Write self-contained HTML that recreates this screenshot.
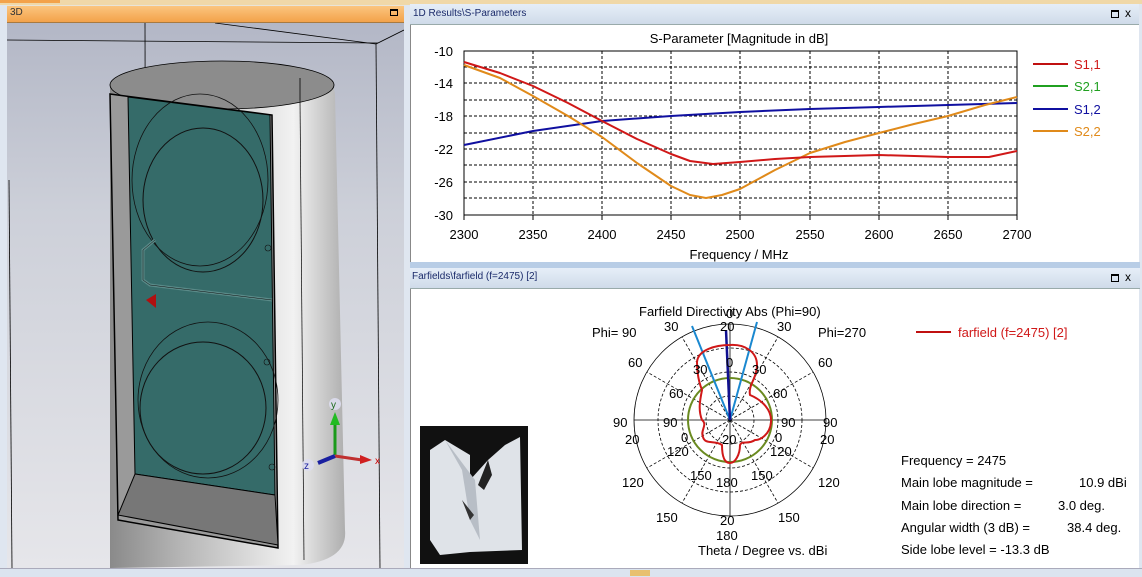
<!DOCTYPE html>
<html><head><meta charset="utf-8"><style>
html,body{margin:0;padding:0;}
body{width:1142px;height:576px;position:relative;overflow:hidden;background:#e8e4d8;font-family:"Liberation Sans",sans-serif;}
.abs{position:absolute;}
.t{position:absolute;font-size:12px;color:#000;white-space:nowrap;}
</style></head><body>
<div class="abs" style="left:0;top:0;width:1142px;height:5px;background:#f0d8a8"></div>
<div class="abs" style="left:0;top:0;width:60px;height:3px;background:#f3a24a"></div>
<!-- 3D panel -->
<div class="abs" style="left:0;top:5px;width:7px;height:565px;background:#dfe6f0"></div>
<div class="abs" style="left:7px;top:6px;width:397px;height:16px;background:linear-gradient(#fbc57f,#f3a24a);border-bottom:1px solid #a87a40"></div>
<div class="t" style="left:10px;top:7px;font-size:10px;color:#333">3D</div>
<div class="abs" style="left:390px;top:9px;width:8px;height:7px;border:1px solid #000;border-top-width:2px;box-sizing:border-box"></div>
<svg class="abs" style="left:7px;top:23px" width="397" height="545" viewBox="7 23 397 545">
<defs>
<linearGradient id="bg" x1="0" y1="0" x2="0" y2="1"><stop offset="0" stop-color="#b3b7c6"/><stop offset="0.35" stop-color="#cdd0d9"/><stop offset="1" stop-color="#e6e6ea"/></linearGradient>
<linearGradient id="cyl" x1="0" y1="0" x2="1" y2="0"><stop offset="0" stop-color="#8a8a8a"/><stop offset="0.3" stop-color="#b5b5b5"/><stop offset="0.78" stop-color="#f2f2f2"/><stop offset="1" stop-color="#aeaeae"/></linearGradient>
</defs>
<rect x="7" y="23" width="397" height="545" fill="url(#bg)"/>
<line x1="7" y1="40" x2="378" y2="43" stroke="#000" stroke-width="0.8"/>
<line x1="145" y1="23" x2="146" y2="540" stroke="#000" stroke-width="0.8"/>
<line x1="215" y1="23" x2="376" y2="44" stroke="#000" stroke-width="0.8"/>
<line x1="376" y1="44" x2="404" y2="30" stroke="#000" stroke-width="0.8"/>
<line x1="376" y1="44" x2="380" y2="568" stroke="#000" stroke-width="0.8"/>
<line x1="9" y1="180" x2="12" y2="568" stroke="#000" stroke-width="0.8"/>
<path d="M110 90 Q110 62 220 62 Q335 65 335 95 L345 530 Q348 560 300 565 L110 568 Z" fill="url(#cyl)"/>
<ellipse cx="222" cy="85" rx="112" ry="24" fill="#8c8c8c" stroke="#000" stroke-width="0.8"/>
<path d="M300 78 L300 100" stroke="#000" stroke-width="0.8"/>
<path d="M300 100 L304 560" stroke="#000" stroke-width="0.7"/>
<path d="M110 94 L272 115 L278 548 L118 520 Z" fill="#9a9a9a" stroke="#000" stroke-width="1.5"/>
<path d="M128 97 L270 115 L275 495 L135 474 Z" fill="#356b69" stroke="#000" stroke-width="1"/>
<path d="M118 515 L135 474 L275 495 L278 545 Z" fill="#777" stroke="#000" stroke-width="1"/>
<ellipse cx="200" cy="180" rx="68" ry="86" fill="none" stroke="#111" stroke-width="0.8"/>
<ellipse cx="203" cy="200" rx="60" ry="72" fill="none" stroke="#111" stroke-width="1"/>
<ellipse cx="208" cy="400" rx="70" ry="78" fill="none" stroke="#111" stroke-width="0.8"/>
<ellipse cx="203" cy="408" rx="63" ry="66" fill="none" stroke="#111" stroke-width="1"/>
<path d="M155 240 L143 250 L143 280 L150 285 L272 300" stroke="#5a8a88" stroke-width="3" fill="none"/>
<path d="M155 240 L143 250 L143 280 L150 285 L272 300" stroke="#111" stroke-width="0.5" fill="none"/>
<path d="M146 300 L156 294 L156 308 Z" fill="#b01010"/>
<circle cx="268" cy="248" r="3" fill="none" stroke="#111" stroke-width="0.6"/>
<circle cx="267" cy="362" r="3" fill="none" stroke="#111" stroke-width="0.6"/>
<circle cx="272" cy="467" r="3" fill="none" stroke="#111" stroke-width="0.6"/>
<line x1="335" y1="455" x2="335" y2="418" stroke="#1a9a1a" stroke-width="3"/>
<path d="M330 425 L335 412 L340 425 Z" fill="#22bb22"/>
<circle cx="335" cy="404" r="6" fill="#dde" opacity="0.9"/><text x="331" y="408" font-size="10" fill="#1a6a1a" font-family="Liberation Sans">y</text>
<line x1="335" y1="456" x2="362" y2="460" stroke="#c03030" stroke-width="3"/>
<path d="M360 455 L372 460 L360 464 Z" fill="#d02020"/>
<text x="375" y="464" font-size="10" fill="#c00" font-family="Liberation Sans">x</text>
<line x1="335" y1="456" x2="318" y2="463" stroke="#1a20a0" stroke-width="4"/>
<circle cx="308" cy="465" r="6" fill="#dde" opacity="0.9"/><text x="304" y="469" font-size="10" fill="#1a20a0" font-family="Liberation Sans">z</text>
</svg>
<div class="abs" style="left:404px;top:5px;width:6px;height:565px;background:#dfe6f0"></div>
<!-- S-param panel -->
<div class="abs" style="left:410px;top:4px;width:730px;height:20px;background:linear-gradient(#e6eef8,#cfdbe9);border-bottom:1px solid #9aa"></div>
<div class="t" style="left:413px;top:8px;font-size:10px;color:#1a2a6a">1D Results\S-Parameters</div>
<div class="abs" style="left:1111px;top:10px;width:8px;height:8px;border:1px solid #000;border-top-width:2px;box-sizing:border-box"></div>
<div class="t" style="left:1125px;top:6px;font-size:12px">x</div>
<div class="abs" style="left:410px;top:25px;width:728px;height:237px;background:#fff;border-left:1px solid #888"></div>
<svg class="abs" style="left:410px;top:25px" width="730" height="237" viewBox="410 25 730 237" font-family="Liberation Sans" font-size="13">
<g stroke="#000" stroke-width="1" stroke-dasharray="3,2">
<line x1="464" y1="67" x2="1017" y2="67"/><line x1="464" y1="83" x2="1017" y2="83"/><line x1="464" y1="100" x2="1017" y2="100"/><line x1="464" y1="116" x2="1017" y2="116"/><line x1="464" y1="133" x2="1017" y2="133"/><line x1="464" y1="149" x2="1017" y2="149"/><line x1="464" y1="165" x2="1017" y2="165"/><line x1="464" y1="182" x2="1017" y2="182"/><line x1="464" y1="198" x2="1017" y2="198"/>
<line x1="533" y1="51" x2="533" y2="215"/><line x1="602" y1="51" x2="602" y2="215"/><line x1="671" y1="51" x2="671" y2="215"/><line x1="740" y1="51" x2="740" y2="215"/><line x1="810" y1="51" x2="810" y2="215"/><line x1="879" y1="51" x2="879" y2="215"/><line x1="948" y1="51" x2="948" y2="215"/>
</g>
<rect x="464" y="51" width="553" height="164" fill="none" stroke="#000" stroke-width="1"/>
<g stroke="#000"><line x1="464" y1="215" x2="464" y2="220"/><line x1="533" y1="215" x2="533" y2="220"/><line x1="602" y1="215" x2="602" y2="220"/><line x1="671" y1="215" x2="671" y2="220"/><line x1="740" y1="215" x2="740" y2="220"/><line x1="810" y1="215" x2="810" y2="220"/><line x1="879" y1="215" x2="879" y2="220"/><line x1="948" y1="215" x2="948" y2="220"/><line x1="1017" y1="215" x2="1017" y2="220"/></g>
<polyline fill="none" stroke="#1010a0" stroke-width="2" points="464,145 533,131 602,121 671,116 740,112 810,109 879,107 948,105 1017,103"/>
<polyline fill="none" stroke="#e08a1a" stroke-width="2" stroke-linejoin="round" points="464,65 500,78 533,96 568,116 602,137 637,163 671,186 690,195 706,198 722,195 740,189 775,170 810,153 845,142 879,133 914,124 948,116 985,105 1017,97"/>
<polyline fill="none" stroke="#d01818" stroke-width="2" stroke-linejoin="round" points="464,62 500,73 533,86 568,103 602,121 637,139 671,154 690,161 713,164 740,162 775,159 810,157 879,155 948,157 989,157 1017,151"/>
<g text-anchor="end"><text x="453" y="56">-10</text><text x="453" y="88">-14</text><text x="453" y="121">-18</text><text x="453" y="154">-22</text><text x="453" y="187">-26</text><text x="453" y="220">-30</text></g>
<g text-anchor="middle"><text x="464" y="239">2300</text><text x="533" y="239">2350</text><text x="602" y="239">2400</text><text x="671" y="239">2450</text><text x="740" y="239">2500</text><text x="810" y="239">2550</text><text x="879" y="239">2600</text><text x="948" y="239">2650</text><text x="1017" y="239">2700</text>
<text x="739" y="43">S-Parameter [Magnitude in dB]</text><text x="739" y="259">Frequency / MHz</text></g>
<line x1="1033" y1="64" x2="1068" y2="64" stroke="#c01010" stroke-width="2"/><text x="1074" y="69" fill="#d01818">S1,1</text>
<line x1="1033" y1="86" x2="1068" y2="86" stroke="#20a020" stroke-width="2"/><text x="1074" y="91" fill="#20a020">S2,1</text>
<line x1="1033" y1="109" x2="1068" y2="109" stroke="#1010a0" stroke-width="2"/><text x="1074" y="114" fill="#1010a0">S1,2</text>
<line x1="1033" y1="131" x2="1068" y2="131" stroke="#e08a1a" stroke-width="2"/><text x="1074" y="136" fill="#e08a1a">S2,2</text>
</svg>
<div class="abs" style="left:1139px;top:4px;width:3px;height:566px;background:#dfe6f0"></div>
<div class="abs" style="left:410px;top:262px;width:730px;height:6px;background:#b8cde6"></div>
<!-- Farfield panel -->
<div class="abs" style="left:410px;top:268px;width:730px;height:20px;background:linear-gradient(#e6eef8,#cfdbe9);border-bottom:1px solid #9aa"></div>
<div class="t" style="left:412px;top:271px;font-size:10px;color:#1a2a6a">Farfields\farfield (f=2475) [2]</div>
<div class="abs" style="left:1111px;top:274px;width:8px;height:8px;border:1px solid #000;border-top-width:2px;box-sizing:border-box"></div>
<div class="t" style="left:1125px;top:270px;font-size:12px">x</div>
<div class="abs" style="left:410px;top:289px;width:728px;height:279px;background:#fff;border-left:1px solid #888"></div>
<svg class="abs" style="left:410px;top:289px" width="730" height="279" viewBox="410 289 730 279" font-family="Liberation Sans" font-size="13">
<g fill="none" stroke="#000" stroke-width="0.8">
<circle cx="730" cy="420" r="96"/>
<g stroke-dasharray="3,2"><circle cx="730" cy="420" r="72"/><circle cx="730" cy="420" r="48"/><circle cx="730" cy="420" r="24"/>
<line x1="730" y1="420" x2="682" y2="337"/><line x1="730" y1="420" x2="778" y2="337"/><line x1="730" y1="420" x2="647" y2="372"/><line x1="730" y1="420" x2="813" y2="372"/>
<line x1="730" y1="420" x2="647" y2="468"/><line x1="730" y1="420" x2="813" y2="468"/><line x1="730" y1="420" x2="682" y2="503"/><line x1="730" y1="420" x2="778" y2="503"/></g>
<line x1="634" y1="420" x2="826" y2="420"/><line x1="730" y1="324" x2="730" y2="516"/>
</g>
<circle cx="730" cy="420" r="42" fill="none" stroke="#6a8a20" stroke-width="2"/>
<line x1="730" y1="420" x2="692" y2="326" stroke="#1a88d0" stroke-width="2"/>
<line x1="730" y1="420" x2="757" y2="322" stroke="#1a88d0" stroke-width="2"/>
<line x1="730" y1="420" x2="726" y2="330" stroke="#101090" stroke-width="2.5"/>
<path d="M730 345 C745 344 757 352 757 365 C757 378 748 385 750 395 C762 400 772 410 771 422 C770 435 760 440 755 440 C748 445 742 440 740 445 C740 455 735 463 730 463 C724 463 722 455 722 445 C715 440 705 445 703 437 C700 430 708 425 702 420 C698 410 700 400 702 390 C698 380 697 370 697 362 C698 350 715 345 730 345 Z" fill="none" stroke="#d01818" stroke-width="2" stroke-linejoin="round"/>
<g font-size="13" fill="#000">
<text x="639" y="316">Farfield Directivity Abs (Phi=90)</text>
<text x="592" y="337">Phi= 90</text><text x="818" y="337">Phi=270</text>
<text x="664" y="331">30</text><text x="777" y="331">30</text><text x="720" y="331">20</text><text x="726" y="318">0</text>
<text x="628" y="367">60</text><text x="818" y="367">60</text>
<text x="693" y="374">30</text><text x="752" y="374">30</text><text x="726" y="367">0</text>
<text x="669" y="398">60</text><text x="773" y="398">60</text>
<text x="613" y="427">90</text><text x="663" y="427">90</text><text x="781" y="427">90</text><text x="823" y="427">90</text>
<text x="625" y="444">20</text><text x="820" y="444">20</text><text x="681" y="442">0</text><text x="775" y="442">0</text><text x="722" y="444">20</text>
<text x="667" y="456">120</text><text x="770" y="456">120</text>
<text x="622" y="487">120</text><text x="818" y="487">120</text>
<text x="690" y="480">150</text><text x="751" y="480">150</text><text x="716" y="487">180</text>
<text x="656" y="522">150</text><text x="778" y="522">150</text><text x="720" y="525">20</text><text x="716" y="540">180</text>
<text x="698" y="555">Theta / Degree vs. dBi</text>
<text x="901" y="465">Frequency = 2475</text>
<text x="901" y="487">Main lobe magnitude =</text><text x="1079" y="487">10.9 dBi</text>
<text x="901" y="510">Main lobe direction =</text><text x="1058" y="510">3.0 deg.</text>
<text x="901" y="532">Angular width (3 dB) =</text><text x="1067" y="532">38.4 deg.</text>
<text x="901" y="554">Side lobe level =  -13.3 dB</text>
</g>
<line x1="916" y1="332" x2="951" y2="332" stroke="#c01010" stroke-width="2"/>
<text x="958" y="337" fill="#d01818">farfield (f=2475) [2]</text>
<rect x="420" y="426" width="108" height="138" fill="#111"/>
<path d="M430 450 L445 440 L470 455 L470 480 L488 460 L505 445 L520 437 L522 550 L470 552 L440 555 L430 540 Z" fill="#dfe3e8"/>
<path d="M445 440 L462 470 L470 520 L480 540 L475 480 Z" fill="#b8bec6"/>
<path d="M488 460 L478 485 L484 490 L492 475 Z" fill="#222"/>
<path d="M462 500 L470 520 L474 515 Z" fill="#333"/>
</svg>
<div class="abs" style="left:0;top:568px;width:1142px;height:8px;background:#dbe4ef;border-top:1px solid #aab"></div>
<div class="abs" style="left:630px;top:570px;width:20px;height:6px;background:#e8c070"></div>
</body></html>
